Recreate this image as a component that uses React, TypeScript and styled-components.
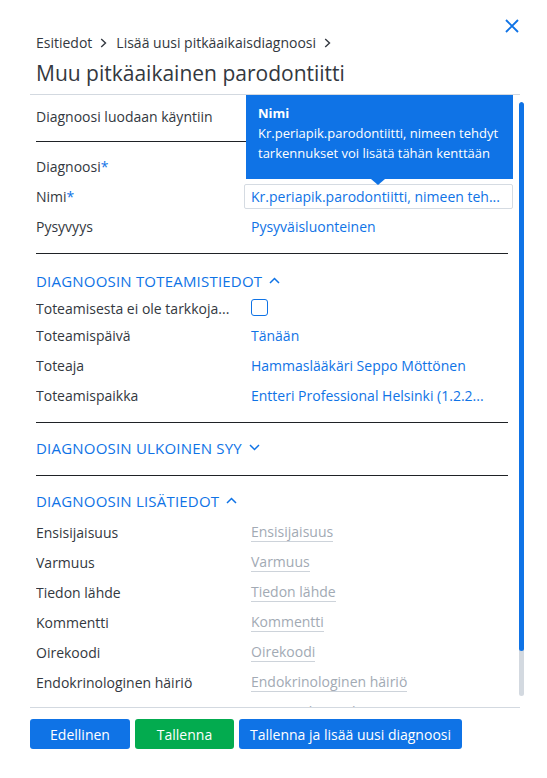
import React from "react";
import styled, { createGlobalStyle } from "styled-components";

const BLUE = "#0f73e6";
const TEXT = "#333840";
const FONT = `"Open Sans", "Noto Sans", "Liberation Sans", sans-serif`;

const GlobalStyle = createGlobalStyle`
  html, body { margin: 0; padding: 0; background: #ffffff; }
  body { font-family: ${FONT}; color: ${TEXT}; -webkit-font-smoothing: antialiased; }
  * { box-sizing: border-box; }
`;

const Panel = styled.div`
  position: relative;
  width: 547px;
  height: 778px;
  display: flex;
  flex-direction: column;
  background: #fff;
  overflow: hidden;
`;

const Header = styled.header`
  display: flex;
  justify-content: space-between;
  align-items: flex-start;
  padding: 18px 27px 0 36px;
`;

const TitleBlock = styled.div`
  display: flex;
  flex-direction: column;
  padding-top: 14px;
`;

const Breadcrumb = styled.nav`
  display: flex;
  align-items: center;
  height: 20px;
  font-size: 14px;
  color: ${TEXT};
`;

const Crumb = styled.span`
  white-space: nowrap;
`;

const CrumbSep = styled.svg`
  width: 7px;
  height: 10px;
  margin: 1px 9px 0 8px;
`;

const Title = styled.h1`
  margin: 6px 0 0;
  height: 30px;
  line-height: 30px;
  font-size: 21px;
  font-weight: 400;
  color: ${TEXT};
  white-space: nowrap;
`;

const CloseButton = styled.button`
  border: 0;
  background: none;
  padding: 0;
  width: 16px;
  height: 16px;
  display: flex;
  cursor: pointer;
`;

const Rule = styled.div<{ $strong?: boolean; $mt?: number }>`
  height: 1px;
  flex-shrink: 0;
  background: ${(p) => (p.$strong ? "#1f2226" : "#d3d9e0")};
  margin-top: ${(p) => p.$mt ?? 0}px;
`;

const PageRule = styled(Rule)`
  margin-left: 30px;
  margin-right: 27px;
`;

const ScrollArea = styled.div`
  display: flex;
  height: 612px;
  padding-left: 36px;
  overflow: hidden;
  flex-shrink: 0;
`;

const Content = styled.div`
  width: 472px;
  flex-shrink: 0;
  display: flex;
  flex-direction: column;
`;

const ScrollTrack = styled.div`
  margin: 7px 0 0 11px;
  width: 5px;
  height: 594px;
  border-radius: 3px;
  background: #d3d9e0;
  display: flex;
  flex-direction: column;
  overflow: hidden;
`;

const ScrollThumb = styled.div`
  height: 549px;
  border-radius: 3px;
  background: ${BLUE};
`;

const Row = styled.div<{ $h?: number; $mt?: number }>`
  display: grid;
  grid-template-columns: 215px 1fr;
  align-items: center;
  height: ${(p) => p.$h ?? 30}px;
  margin-top: ${(p) => p.$mt ?? 0}px;
  font-size: 14px;
  flex-shrink: 0;
`;

const Label = styled.span`
  color: ${TEXT};
  white-space: nowrap;
  overflow: hidden;
  text-overflow: ellipsis;
  padding-right: 16px;
`;

const Req = styled.span`
  color: ${BLUE};
`;

const Value = styled.span`
  color: ${BLUE};
  white-space: nowrap;
  overflow: hidden;
  text-overflow: ellipsis;
  padding-right: 20px;
`;

const Placeholder = styled.span`
  justify-self: start;
  color: #a2aab4;
  white-space: nowrap;
  line-height: 18px;
  border-bottom: 1px solid #cdd3da;
`;

const TextInput = styled.div`
  margin-left: -7px;
  width: 269px;
  height: 25px;
  border: 1px solid #d5dbe2;
  border-radius: 2px;
  padding: 0 10px 0 6px;
  display: flex;
  align-items: center;
  color: ${BLUE};
  white-space: nowrap;
  overflow: hidden;
`;

const InputText = styled.span`
  overflow: hidden;
  text-overflow: ellipsis;
`;

const Checkbox = styled.span`
  width: 17px;
  height: 17px;
  border: 1.5px solid ${BLUE};
  border-radius: 3px;
  margin-top: -1px;
`;

const SectionHeader = styled.button<{ $mt?: number }>`
  display: flex;
  align-items: center;
  gap: 7px;
  height: 30px;
  margin-top: ${(p) => p.$mt ?? 0}px;
  padding: 0;
  border: 0;
  background: none;
  font-family: ${FONT};
  font-size: 15px;
  letter-spacing: 0.2px;
  color: ${BLUE};
  text-transform: uppercase;
  cursor: pointer;
  flex-shrink: 0;
  align-self: flex-start;
`;

const Caret = styled.svg`
  width: 11px;
  height: 7px;
  margin-top: -2px;
`;

const Tooltip = styled.div`
  position: absolute;
  left: 246px;
  top: 95px;
  width: 267px;
  height: 84px;
  background: ${BLUE};
  color: #fff;
  padding: 8px 10px 0 12px;
  font-size: 13px;
  line-height: 20px;
  &::after {
    content: "";
    position: absolute;
    left: 125px;
    bottom: -6px;
    border-left: 7px solid transparent;
    border-right: 7px solid transparent;
    border-top: 6px solid ${BLUE};
  }
`;

const TooltipTitle = styled.div`
  font-weight: 700;
`;

const Footer = styled.footer`
  display: flex;
  gap: 5px;
  padding: 11px 0 0 30px;
`;

const Button = styled.button<{ $tone: "blue" | "green"; $w: number }>`
  width: ${(p) => p.$w}px;
  height: 30px;
  border: 0;
  border-radius: 3px;
  background: ${(p) => (p.$tone === "green" ? "#03ab4f" : BLUE)};
  color: #fff;
  font-family: ${FONT};
  font-size: 14px;
  padding: 0;
  cursor: pointer;
  white-space: nowrap;
`;

const Chevron = () => (
  <CrumbSep viewBox="0 0 7 10" fill="none">
    <path d="M1.2 1 L5.5 5 L1.2 9" stroke="#333840" strokeWidth="1.4" />
  </CrumbSep>
);

const CaretIcon = ({ up }: { up: boolean }) => (
  <Caret viewBox="0 0 11 7" fill="none">
    <path
      d={up ? "M1 6 L5.5 1.5 L10 6" : "M1 1 L5.5 5.5 L10 1"}
      stroke={BLUE}
      strokeWidth="1.5"
    />
  </Caret>
);

const extraFields = [
  "Ensisijaisuus",
  "Varmuus",
  "Tiedon lähde",
  "Kommentti",
  "Oirekoodi",
  "Endokrinologinen häiriö",
  "Haittavaikutus ilmoitettu",
];

export default function App() {
  return (
    <>
      <GlobalStyle />
      <Panel>
        <Header>
          <TitleBlock>
            <Breadcrumb>
              <Crumb>Esitiedot</Crumb>
              <Chevron />
              <Crumb>Lisää uusi pitkäaikaisdiagnoosi</Crumb>
              <Chevron />
            </Breadcrumb>
            <Title>Muu pitkäaikainen parodontiitti</Title>
          </TitleBlock>
          <CloseButton aria-label="Sulje">
            <svg width="16" height="16" viewBox="0 0 16 16" fill="none">
              <path d="M2 2 L14 14 M14 2 L2 14" stroke={BLUE} strokeWidth="1.9" />
            </svg>
          </CloseButton>
        </Header>

        <PageRule $mt={6} />

        <ScrollArea>
          <Content>
            <Row $mt={6}>
              <Label>Diagnoosi luodaan käyntiin</Label>
              <span />
            </Row>
            <Rule $strong $mt={10} />

            <Row $mt={9}>
              <Label>
                Diagnoosi<Req>*</Req>
              </Label>
              <span />
            </Row>
            <Row>
              <Label>
                Nimi<Req>*</Req>
              </Label>
              <TextInput>
                <InputText>Kr.periapik.parodontiitti, nimeen teh...</InputText>
              </TextInput>
            </Row>
            <Row>
              <Label>Pysyvyys</Label>
              <Value>Pysyväisluonteinen</Value>
            </Row>
            <Rule $strong $mt={12} />

            <SectionHeader $mt={12}>
              Diagnoosin toteamistiedot
              <CaretIcon up />
            </SectionHeader>
            <Row $h={24}>
              <Label>Toteamisesta ei ole tarkkoja...</Label>
              <Checkbox />
            </Row>
            <Row>
              <Label>Toteamispäivä</Label>
              <Value>Tänään</Value>
            </Row>
            <Row>
              <Label>Toteaja</Label>
              <Value>Hammaslääkäri Seppo Möttönen</Value>
            </Row>
            <Row>
              <Label>Toteamispaikka</Label>
              <Value>Entteri Professional Helsinki (1.2.2...</Value>
            </Row>
            <Rule $strong $mt={12} />

            <SectionHeader $mt={10}>
              Diagnoosin ulkoinen syy
              <CaretIcon up={false} />
            </SectionHeader>
            <Rule $strong $mt={12} />

            <SectionHeader $mt={10}>
              Diagnoosin lisätiedot
              <CaretIcon up />
            </SectionHeader>
            <Row $mt={1}>
              <Label>{extraFields[0]}</Label>
              <Placeholder>{extraFields[0]}</Placeholder>
            </Row>
            {extraFields.slice(1).map((f) => (
              <Row key={f}>
                <Label>{f}</Label>
                <Placeholder>{f}</Placeholder>
              </Row>
            ))}
          </Content>
          <ScrollTrack>
            <ScrollThumb />
          </ScrollTrack>
        </ScrollArea>

        <PageRule />

        <Footer>
          <Button $tone="blue" $w={100}>Edellinen</Button>
          <Button $tone="green" $w={99}>Tallenna</Button>
          <Button $tone="blue" $w={223}>Tallenna ja lisää uusi diagnoosi</Button>
        </Footer>

        <Tooltip role="tooltip">
          <TooltipTitle>Nimi</TooltipTitle>
          <div>Kr.periapik.parodontiitti, nimeen tehdyt</div>
          <div>tarkennukset voi lisätä tähän kenttään</div>
        </Tooltip>
      </Panel>
    </>
  );
}
